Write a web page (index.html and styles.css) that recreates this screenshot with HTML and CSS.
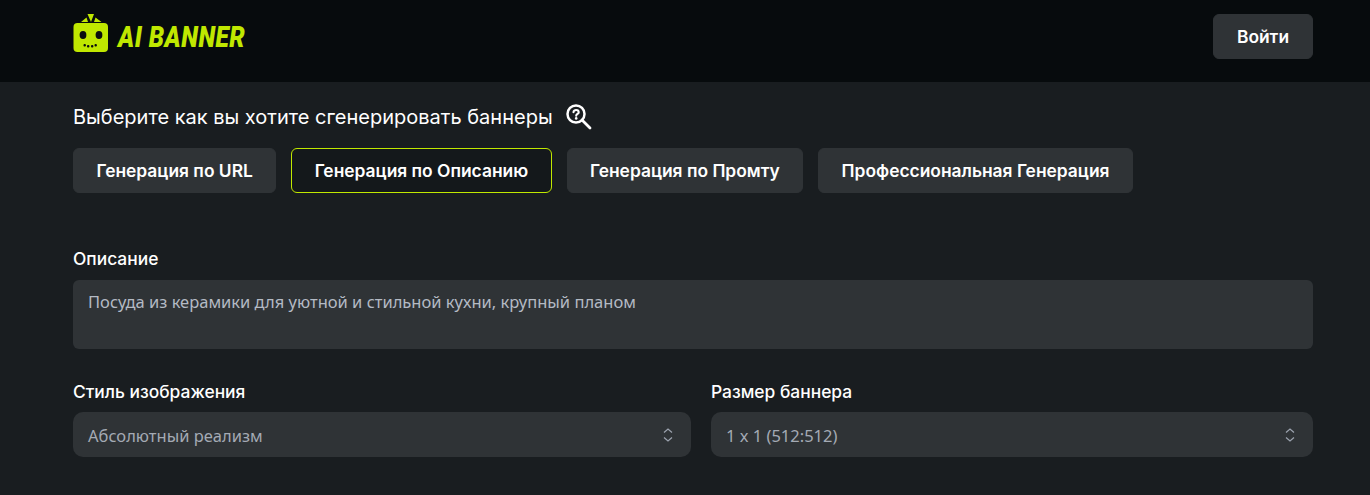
FILE: index.html
```html
<!DOCTYPE html>
<html lang="ru">
<head>
  <meta charset="UTF-8" />
  <meta name="viewport" content="width=device-width, initial-scale=1.0"/>
  <title>AI Banner</title>
  <link rel="stylesheet" href="styles.css">
</head>
<body>
  <header class="topbar">
    <div class="logo">
      <svg class="logo-icon" width="36" height="38" viewBox="0 0 36 38">
        <path d="M14.500 0L21 0L18 8Z M8 8L13.500 3.500L15 8Z M21 8L22.500 3.500L28.500 8Z" fill="#c0e800"/>
        <rect x="0.500" y="9" width="34.500" height="29" rx="4" fill="#c0e800"/>
        <ellipse cx="10" cy="21" rx="3.400" ry="4" fill="#0a0d0f"/>
        <ellipse cx="26" cy="21" rx="3.400" ry="4" fill="#0a0d0f"/>
        <rect x="10.500" y="30" width="2.400" height="2.600" rx="1" fill="#0a0d0f"/>
        <rect x="14" y="31" width="2.400" height="2.600" rx="1" fill="#0a0d0f"/>
        <rect x="18" y="31" width="2.400" height="2.600" rx="1" fill="#0a0d0f"/>
        <rect x="21.500" y="30" width="2.400" height="2.600" rx="1" fill="#0a0d0f"/>
      </svg>
      <span class="logo-text">AI BANNER</span>
    </div>
    <button class="btn login-btn">Войти</button>
  </header>

  <main class="content">
    <div class="heading">
      <span>Выберите как вы хотите сгенерировать баннеры</span>
      <svg width="28" height="28" viewBox="0 0 28 28" fill="none" stroke="#fff">
        <circle cx="11" cy="11" r="8.500" stroke-width="2.500"/>
        <path d="M17 17L25 25" stroke-width="2.800" stroke-linecap="round"/>
        <path d="M8.500 9.300C8.500 6.300 13.700 6.300 13.700 9.400C13.700 11 11.200 11 11.200 12.800" stroke-width="2.100" stroke-linecap="round"/>
        <circle cx="11.200" cy="15.400" r="1.300" fill="#fff" stroke="none"/>
      </svg>
    </div>

    <div class="modes">
      <button class="btn">Генерация по URL</button>
      <button class="btn active">Генерация по Описанию</button>
      <button class="btn">Генерация по Промту</button>
      <button class="btn">Профессиональная Генерация</button>
    </div>

    <label class="field-label">Описание</label>
    <div class="textarea">Посуда из керамики для уютной и стильной кухни, крупный планом</div>

    <div class="selects">
      <div>
        <label class="field-label">Стиль изображения</label>
        <div class="select">
          <span>Абсолютный реализм</span>
          <svg width="10" height="14" viewBox="0 0 10 14" fill="none" stroke="#9ca3af" stroke-width="1.200"><path d="M1 4.500L5 1L9 4.500M1 9.500L5 13L9 9.500"/></svg>
        </div>
      </div>
      <div>
        <label class="field-label">Размер баннера</label>
        <div class="select">
          <span>1 x 1 (512:512)</span>
          <svg width="10" height="14" viewBox="0 0 10 14" fill="none" stroke="#9ca3af" stroke-width="1.200"><path d="M1 4.500L5 1L9 4.500M1 9.500L5 13L9 9.500"/></svg>
        </div>
      </div>
    </div>
  </main>
</body>
</html>
```

FILE: styles.css
```css
* {
  box-sizing: border-box;
}

body {
  font-family: Inter, 'Noto Sans', sans-serif;
  background-color: #191d20;
  color: #fff;
  margin: 0;
  height: 495px;
  overflow: hidden;
}

.topbar {
  height: 82px;
  padding: 14px 57px 0 73px;
  background-color: #070b0d;
  display: flex;
  justify-content: space-between;
  align-items: flex-start;
}

.logo {
  display: flex;
  align-items: flex-end;
  gap: 9px;
  height: 38px;
}

.logo-text {
  font-family: Roboto, sans-serif;
  font-style: italic;
  font-weight: 900;
  font-size: 30px;
  line-height: 30px;
  letter-spacing: 0.6px;
  color: #c0e800;
  display: inline-block;
  transform: scaleX(0.815);
  transform-origin: left center;
}

.btn {
  font-family: inherit;
  font-size: 17.4px;
  font-weight: 600;
  color: #fff;
  height: 45px;
  padding: 0 22.4px;
  background-color: #2f3336;
  border: 1px solid #2f3336;
  border-radius: 6px;
}

.login-btn {
  width: 100px;
  padding: 0;
}

.content {
  padding: 0 57px 0 73px;
}

.heading {
  display: flex;
  align-items: center;
  gap: 12px;
  height: 66px;
  padding-top: 4px;
  font-size: 20px;
}

.modes {
  display: flex;
  gap: 15px;
  margin-bottom: 55px;
}

.active {
  background-color: #14181b;
  border-color: #c0e800;
}

.field-label {
  display: block;
  font-size: 17.4px;
  font-weight: 500;
  line-height: 22px;
  margin-bottom: 10px;
}

.textarea {
  height: 69px;
  padding: 11px 15px;
  background-color: #2f3336;
  border-radius: 6px;
  font-family: 'Noto Sans', sans-serif;
  font-size: 16.5px;
  line-height: 22px;
  color: #b4bac4;
}

.selects {
  display: grid;
  grid-template-columns: 618px 602px;
  gap: 20px;
  margin-top: 32px;
}

.selects .field-label {
  margin-bottom: 9px;
}

.select {
  height: 45px;
  padding: 0 18px 0 15px;
  background-color: #2f3336;
  border-radius: 10px;
  font-family: 'Noto Sans', sans-serif;
  font-size: 16.5px;
  color: #a4aab4;
  display: flex;
  justify-content: space-between;
  align-items: center;
}

.select span {
  margin-top: 2px;
}
```
